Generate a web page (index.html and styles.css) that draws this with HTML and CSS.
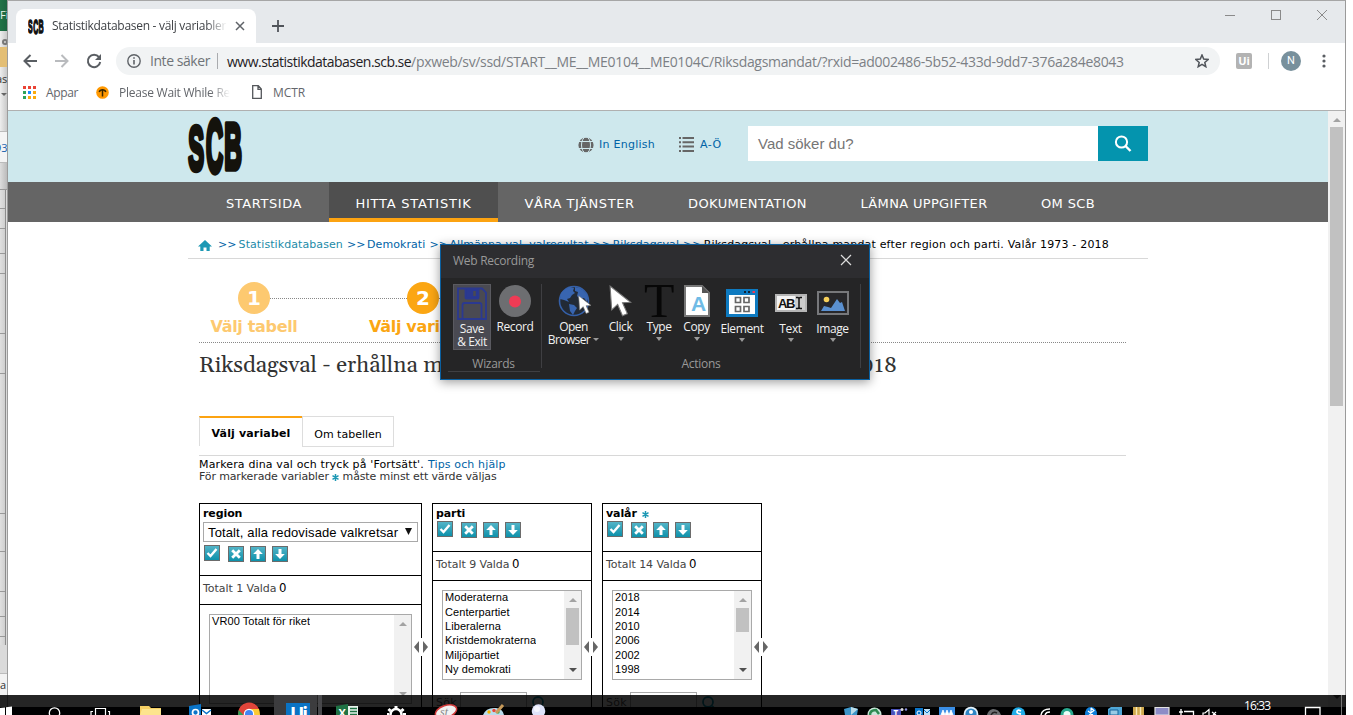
FILE: index.html
```html
<!DOCTYPE html>
<html lang="sv">
<head>
<meta charset="utf-8">
<title>Statistikdatabasen - välj variabler</title>
<link rel="stylesheet" href="styles.css">
</head>
<body>
<svg width="0" height="0" class="defs">
  <defs>
    <linearGradient id="teal" x1="0" y1="0" x2="0" y2="1"><stop offset="0" stop-color="#55b5c8"/><stop offset="1" stop-color="#0b90aa"/></linearGradient>
    <g id="scb" font-family="Liberation Sans" font-weight="700" font-size="70" stroke-width="6" stroke-linejoin="round">
      <text transform="translate(0.200 53.500) scale(.34 .91)">S</text>
      <text transform="translate(18 56.200) scale(.34 1.050)">C</text>
      <text transform="translate(36.200 53.300) scale(.35 .93)">B</text>
    </g>
    <g id="btn"><rect x=".5" y=".5" width="15" height="15" fill="url(#teal)" stroke="#6b6b6b"/></g>
    <g id="b-check"><use href="#btn"/><path d="M3.500 8l3 3 6-7" fill="none" stroke="#fff" stroke-width="2.400"/></g>
    <g id="b-x"><use href="#btn"/><path d="M4.200 4.200l7.600 7.600M11.800 4.200l-7.600 7.600" stroke="#fff" stroke-width="2.800"/></g>
    <g id="b-up"><use href="#btn"/><path d="M8 3l4.800 5H9.500v5h-3V8H3.200z" fill="#fff"/></g>
    <g id="b-down"><use href="#btn"/><path d="M8 13l4.800-5H9.500V3h-3v5H3.200z" fill="#fff"/></g>
    <path id="pointer" d="M1 1l1.500 22 5.500-5 4.500 10.500 4.500-2-4.500-10 7.500-.5z" fill="#fff" stroke="#777" stroke-width="1"/>
  </defs>
</svg>
<div class="desktop">
  <aside class="excel">
    <div class="ex-title">Fi</div>
    <div class="ex-ribbon"><i class="ex-knob"></i><i class="ex-gold"></i><span>as</span><i class="ex-caret"></i></div>
    <div class="ex-formula">93</div>
    <div class="ex-head"></div>
    <div class="ex-rows"><i class="r1"></i><i class="r2"></i><i class="r3"></i><i class="r2"></i><i class="r4"></i><i class="r5"></i><i class="r6"></i><i class="r7"></i><i class="r5"></i><i class="r3"></i><i class="r8"></i></div>
    <div class="ex-status">a</div>
  </aside>

  <div class="browser">
    <div class="tabstrip">
      <div class="tab">
        <svg width="16" height="17" viewBox="0 0 55 61" preserveAspectRatio="none"><use href="#scb" fill="#111" stroke="#111"/></svg>
        <span class="tab-title">Statistikdatabasen - välj variabler</span>
        <svg class="tab-close" width="10" height="10"><path d="M1 1l8 8M9 1L1 9" stroke="#5f6368" stroke-width="1.500"/></svg>
      </div>
      <svg class="newtab" width="12" height="12"><path d="M6 0v12M0 6h12" stroke="#50545a" stroke-width="1.800"/></svg>
      <div class="wincontrols">
        <svg width="10" height="10"><path d="M0 5.500h10" stroke="#8a8a8a"/></svg>
        <svg width="10" height="10"><rect x=".5" y=".5" width="9" height="9" fill="none" stroke="#8a8a8a"/></svg>
        <svg width="10" height="10"><path d="M0 0l10 10M10 0L0 10" stroke="#8a8a8a"/></svg>
      </div>
    </div>
    <div class="toolbar">
      <svg class="nav-i" width="14" height="14" fill="none" stroke="#5a5e63" stroke-width="2"><path d="M14 7H1.500M7.500 1l-6 6 6 6"/></svg>
      <svg class="nav-i" width="14" height="14" fill="none" stroke="#b9bbbe" stroke-width="2"><path d="M0 7h12.500M6.500 1l6 6-6 6"/></svg>
      <svg class="nav-i" width="16" height="16"><path d="M13 4.200A6.200 6.200 0 1 0 14.200 9" fill="none" stroke="#5a5e63" stroke-width="2"/><path d="M15 1v6H9z" fill="#5a5e63"/></svg>
      <div class="omnibox">
        <svg width="14" height="14"><circle cx="7" cy="7" r="6.200" fill="none" stroke="#5f6368" stroke-width="1.400"/><path d="M7 6v4.500M7 3.200v1.600" stroke="#5f6368" stroke-width="1.600"/></svg>
        <span class="insecure">Inte säker</span>
        <span class="host">www.statistikdatabasen.scb.se</span><span class="path">/pxweb/sv/ssd/START__ME__ME0104__ME0104C/Riksdagsmandat/?rxid=ad002486-5b52-433d-9dd7-376a284e8043</span>
        <svg class="star" width="14" height="14"><path d="M7 1l1.700 4.100 4.400.4-3.300 2.900 1 4.300L7 10.400l-3.800 2.300 1-4.300L.9 5.500l4.400-.4z" fill="none" stroke="#50545a" stroke-width="1.500"/></svg>
      </div>
      <div class="ui-ext">Ui</div>
      <div class="tool-sep"></div>
      <div class="avatar">N</div>
      <svg class="dots" width="4" height="14" fill="#5a5e63"><circle cx="2" cy="2" r="1.600"/><circle cx="2" cy="7" r="1.600"/><circle cx="2" cy="12" r="1.600"/></svg>
    </div>
    <div class="bookmarks">
      <svg width="13" height="13"><g fill="#ea4335"><path d="M0 0h3v3H0zM5 0h3v3H5zM10 0h3v3h-3z"/></g><path d="M0 5h3v3H0zM0 10h3v3H0z" fill="#2fa35a"/><path d="M5 5h3v3H5z" fill="#1a8cff"/><path d="M10 5h3v3h-3zM5 10h3v3H5zM10 10h3v3h-3z" fill="#fbab0c"/></svg>
      <span class="bm-appar">Appar</span>
      <svg width="13" height="13"><circle cx="6.500" cy="6.500" r="6.300" fill="#ff9800"/><path d="M3.200 6a3.500 3.500 0 0 1 6.600 0M6.500 4.500v6" fill="none" stroke="#3a2600" stroke-width="1.500"/></svg>
      <span class="bm-wait">Please Wait While Red</span>
      <svg width="10" height="14"><path d="M.7.700h5.600l3 3.300v9.300H.7zM6 .7V4.300h3.300" fill="none" stroke="#54575b" stroke-width="1.300"/></svg>
      <span class="bm-mctr">MCTR</span>
    </div>

    <div class="viewport">
      <div class="page">
        <header class="masthead">
          <div class="wrap mast-row">
            <svg class="logo" width="55" height="61" viewBox="0 0 55 61"><use href="#scb" fill="#14120c" stroke="#14120c"/></svg>
            <svg class="globe" width="16" height="16"><circle cx="8" cy="8" r="7.600" fill="#666"/><path d="M0 4.500h16M0 11.500h16" stroke="#cee8ed" stroke-width="1"/><ellipse cx="8" cy="8" rx="4.500" ry="8" fill="none" stroke="#cee8ed"/></svg>
            <a class="lang">In English</a>
            <svg class="list-i" width="15" height="15" fill="#666"><path d="M0 0h2v2H0zM0 4.300h2v2H0zM0 8.600h2v2H0zM0 13h2v2H0zM3.500 0H15v2H3.500zM3.500 4.300H15v2H3.500zM3.500 8.600H15v2H3.500zM3.500 13H15v2H3.500z"/></svg>
            <a class="az">A-Ö</a>
            <div class="search"><span>Vad söker du?</span>
              <div class="search-btn"><svg width="18" height="18"><circle cx="7.500" cy="7" r="5.600" fill="none" stroke="#fff" stroke-width="2"/><path d="M11.500 11l5 5" stroke="#fff" stroke-width="2.400"/></svg></div>
            </div>
          </div>
        </header>
        <nav class="mainnav">
          <a class="n1">STARTSIDA</a><a class="n2 active">HITTA STATISTIK</a><a class="n3">VÅRA TJÄNSTER</a><a class="n4">DOKUMENTATION</a><a class="n5">LÄMNA UPPGIFTER</a><a class="n6">OM SCB</a>
        </nav>
        <div class="wrap">
          <div class="crumbs">
            <svg width="14" height="11"><path d="M7 0l7 6.500h-2.300V11H8.500V7.500h-3V11H2.300V6.500H0z" fill="#1c98b4"/></svg>
            <i>&gt;&gt;</i><a class="c-teal">Statistikdatabasen</a><i>&gt;&gt;</i><a>Demokrati</a><i>&gt;&gt;</i><a>Allmänna val, valresultat</a><i>&gt;&gt;</i><a>Riksdagsval</a><i>&gt;&gt;</i><b>Riksdagsval - erhållna mandat efter region och parti. Valår 1973 - 2018</b>
          </div>
          <main class="content">
            <div class="steps">
              <div class="step s1"><span>1</span><em>Välj tabell</em></div>
              <div class="step-line"></div>
              <div class="step s2"><span>2</span><em>Välj variabel</em></div>
              <div class="step-line"></div>
            </div>
            <h1>Riksdagsval - erhållna mandat efter region och parti. Valår 1973 - 2018</h1>
            <div class="tabs"><div class="t-on">Välj variabel</div><div class="t-off">Om tabellen</div></div>
            <p class="help"><span class="h1a">Markera dina val och tryck på 'Fortsätt'.</span> <a>Tips och hjälp</a></p>
            <p class="help2">För markerade variabler <svg width="7" height="7"><path d="M3.500 0v7M.5 1.700l6 3.600M6.500 1.700l-6 3.600" stroke="#1c98b4" stroke-width="1.500"/></svg> måste minst ett värde väljas</p>
            <div class="boxes">
              <section class="box region">
                <div class="b-top"><h2>region</h2>
                  <div class="select"><span>Totalt, alla redovisade valkretsar</span><svg width="7" height="7"><path d="M0 0h7L3.500 7z" fill="#111"/></svg></div>
                  <div class="icons"><svg width="16" height="16"><use href="#b-check"/></svg><svg width="16" height="16"><use href="#b-x"/></svg><svg width="16" height="16"><use href="#b-up"/></svg><svg width="16" height="16"><use href="#b-down"/></svg></div>
                </div>
                <div class="b-tot">Totalt 1 Valda <span>0</span></div>
                <div class="listbox"><ul><li>VR00 Totalt för riket</li></ul><div class="sb off"><i class="up"></i><i class="dn"></i></div></div>
                <svg class="grip" width="16" height="18"><rect width="16" height="18" fill="#fff"/><path d="M6 3v12L1 9zM10 3v12l5-6z" fill="#666"/></svg>
              </section>
              <section class="box small">
                <div class="b-top"><h2>parti</h2>
                  <div class="icons"><svg width="16" height="16"><use href="#b-check"/></svg><svg width="16" height="16"><use href="#b-x"/></svg><svg width="16" height="16"><use href="#b-up"/></svg><svg width="16" height="16"><use href="#b-down"/></svg></div>
                </div>
                <div class="b-tot">Totalt 9 Valda <span>0</span></div>
                <div class="listbox"><ul><li>Moderaterna</li><li>Centerpartiet</li><li>Liberalerna</li><li>Kristdemokraterna</li><li>Miljöpartiet</li><li>Ny demokrati</li></ul><div class="sb"><i class="up"></i><b class="thumb-37"></b><i class="dn"></i></div></div>
                <div class="sok"><span>Sök</span><i></i><svg width="14" height="14"><circle cx="6" cy="6" r="5" fill="none" stroke="#0b90aa" stroke-width="1.800"/><path d="M10 10l3 3" stroke="#0b90aa" stroke-width="2"/></svg></div>
                <svg class="grip" width="16" height="18"><rect width="16" height="18" fill="#fff"/><path d="M6 3v12L1 9zM10 3v12l5-6z" fill="#666"/></svg>
              </section>
              <section class="box small">
                <div class="b-top"><h2>valår <svg width="7" height="7"><path d="M3.500 0v7M.5 1.700l6 3.600M6.500 1.700l-6 3.600" stroke="#1c98b4" stroke-width="1.500"/></svg></h2>
                  <div class="icons"><svg width="16" height="16"><use href="#b-check"/></svg><svg width="16" height="16"><use href="#b-x"/></svg><svg width="16" height="16"><use href="#b-up"/></svg><svg width="16" height="16"><use href="#b-down"/></svg></div>
                </div>
                <div class="b-tot">Totalt 14 Valda <span>0</span></div>
                <div class="listbox"><ul><li>2018</li><li>2014</li><li>2010</li><li>2006</li><li>2002</li><li>1998</li></ul><div class="sb"><i class="up"></i><b class="thumb-24"></b><i class="dn"></i></div></div>
                <div class="sok"><span>Sök</span><i></i><svg width="14" height="14"><circle cx="6" cy="6" r="5" fill="none" stroke="#0b90aa" stroke-width="1.800"/><path d="M10 10l3 3" stroke="#0b90aa" stroke-width="2"/></svg></div>
                <svg class="grip" width="16" height="18"><rect width="16" height="18" fill="#fff"/><path d="M6 3v12L1 9zM10 3v12l5-6z" fill="#666"/></svg>
              </section>
            </div>
          </main>
        </div>
      </div>
      <div class="pagebar"><i class="up"></i><b></b><i class="dn"></i></div>
    </div>
  </div>

  <div class="recorder">
    <div class="rec-title"><span>Web Recording</span><svg width="12" height="12"><path d="M1 1l10 10M11 1L1 11" stroke="#ddd" stroke-width="1.200"/></svg></div>
    <div class="rec-body">
      <div class="group wizards">
        <div class="tools">
          <div class="tool save"><svg width="32" height="34" fill="none" stroke="#2b3990" stroke-width="1.800"><path d="M2 1.500h24l4 4V32H2z"/><path d="M6.500 32V18q0-2 2-2h15q2 0 2 2v14"/><path d="M9.500 2v8.500q0 1 1 1h11q1 0 1-1V2" fill="#2b3990"/><path d="M18.500 4v5" stroke="#4a4a52" stroke-width="2.500"/></svg><span>Save<br>&amp; Exit</span></div>
          <div class="tool record"><svg width="32" height="32"><circle cx="16" cy="16" r="16" fill="#6d6e71"/><circle cx="16" cy="16.500" r="6" fill="#ef3b55"/></svg><span>Record</span></div>
        </div>
        <div class="g-name">Wizards</div>
      </div>
      <div class="group actions">
        <div class="tools">
          <div class="tool open"><svg width="34" height="32"><circle cx="17" cy="16" r="14.500" fill="#222a36" stroke="#3560a8" stroke-width="1.600"/><path d="M3 14Q3 5 13 2l4 1-1 3 2 2-3 2-2 3-3 1 2 3-5-2zM18 2q10 1 13 11l-1 4-3-4-4 1-3-3 1-4-3-1zM12 19l5 1 3 3-2 3-2 4-3-4z" fill="#3865b0"/><g transform="translate(21 10) scale(.65)"><use href="#pointer"/></g></svg><span>Open<br>Browser<i class="inl"></i></span></div>
          <div class="tool click"><svg width="24" height="32"><g transform="translate(0 0) scale(1.080)"><use href="#pointer"/></g></svg><span>Click</span><i></i></div>
          <div class="tool type"><svg width="30" height="32"><text x="15" y="32" text-anchor="middle" font-family="Liberation Serif" font-size="49" textLength="30" lengthAdjust="spacingAndGlyphs" fill="#070707">T</text></svg><span>Type</span><i></i></div>
          <div class="tool copy"><svg width="26" height="32"><path d="M1 1h17l7 7v23H1z" fill="#fff" stroke="#777" stroke-width="2"/><path d="M18 1v7h7z" fill="#555"/><text x="14.500" y="26" text-anchor="middle" font-family="Liberation Sans" font-weight="700" font-size="21" fill="#6fbbe6">A</text></svg><span>Copy</span><i></i></div>
          <div class="tool element"><svg width="32" height="28"><path d="M0 0h32v28H0z" fill="#0e7ac0"/><path d="M3 6h26v19H3z" fill="#fff"/><path d="M18 3h2M22 3h2" stroke="#123" stroke-width="2"/><path d="M26.500 3h2.500" stroke="#ef3b55" stroke-width="2"/><g fill="none" stroke="#666" stroke-width="1.700"><path d="M9.500 8.500h5v5h-5zM18 8.500h5v5h-5zM9.500 17.500h5v5h-5zM18 17.500h5v5h-5z"/></g></svg><span>Element</span><i></i></div>
          <div class="tool text"><svg width="32" height="18"><rect x="1" y="1" width="30" height="16" fill="#f4f4f4" stroke="#b5b5b5" stroke-width="2"/><path d="M20 2h10v14H20z" fill="#ccc"/><text x="3" y="13.500" font-family="Liberation Sans" font-weight="700" font-size="13" textLength="17" fill="#111">AB</text><path d="M21 3.500h2l1 1 1-1h2M21 14.500h2l1-1 1 1h2M24 4.500v9" fill="none" stroke="#111" stroke-width="1.500"/></svg><span>Text</span><i></i></div>
          <div class="tool image"><svg width="32" height="24"><rect x="1" y="1" width="30" height="22" fill="#27272a" stroke="#77787b" stroke-width="2"/><circle cx="9.500" cy="8.500" r="2.800" fill="#f7d05a"/><path d="M4 20l3-5 4 1 3 1 6-9 3 4 2-1 3 9z" fill="#5a90d0"/></svg><span>Image</span><i></i></div>
        </div>
        <div class="g-name">Actions</div>
      </div>
    </div>
  </div>

  <div class="taskbar">
    <div class="tb-shade"></div>
    <svg class="tb-icons" width="1346" height="20" viewBox="0 695 1346 20">
      <path d="M0 708l5-.5V715H0zM6 707.300l6-.8V715H6z" fill="#fff"/>
      <circle cx="54.500" cy="713" r="5.200" fill="none" stroke="#fff" stroke-width="1.300"/>
      <path d="M95.500 715v-6.500h10v6.500M91 711.500h2M91 711v4M110 711.500h-2M109.500 711v4" fill="none" stroke="#fff" stroke-width="1.200"/>
      <path d="M140 715v-9h9l2 2h10v7z" fill="#f5cf63"/><path d="M142 709h19v6h-21z" fill="#fde48d"/>
      <path d="M189 706l12-2v11h-12z" fill="#0a74c8"/><circle cx="195.500" cy="712.500" r="3" fill="none" stroke="#fff" stroke-width="1.700"/><path d="M202 709h9v6h-9z" fill="#fff"/><path d="M202 710l4.500 3.500 4.500-3.500" fill="none" stroke="#0a74c8" stroke-width="1.500"/>
      <path d="M238 713a11 11 0 0 1 21-4h-10l-5 6h-6z" fill="#e0453a"/><path d="M249 709h10q1 3 1 6h-8z" fill="#fcc934"/><path d="M238.500 710l5 5h-5.500z" fill="#2f9f55"/><circle cx="249" cy="714" r="5.200" fill="#fff"/><circle cx="249" cy="714" r="4" fill="#4285f4"/>
      <path d="M274 695h43v20h-43z" fill="#3c3c3e"/><path d="M318 695h4v20h-4z" fill="#48484b"/><path d="M286 703h24v12h-24z" fill="#0a73c4"/>
      <text x="290" y="721" font-family="Open Sans" font-weight="700" font-size="19" fill="#fff" textLength="18">Ui</text>
      <path d="M336 706l12-2v11h-12z" fill="#1f7244"/><path d="M348 706h10v9h-10z" fill="#e8f3ec"/><path d="M350 708.500h7M350 711.500h7M350 714.500h7" stroke="#1f7244" stroke-width="1.400"/><text x="338.500" y="717" font-family="Open Sans" font-weight="700" font-size="11" fill="#fff">X</text>
      <circle cx="396" cy="714.500" r="5.500" fill="none" stroke="#fff" stroke-width="2.600"/><path d="M396 709v-3M390.500 711l-2-2M401.500 711l2-2M389 714.500h-2M403 714.500h3" stroke="#fff" stroke-width="3"/>
      <ellipse cx="446" cy="711.500" rx="11" ry="6" transform="rotate(-18 446 711.500)" fill="#f2f2f2" stroke="#d03a3a" stroke-width="1.500"/><text x="440" y="716" font-family="Liberation Serif" font-style="italic" font-size="12" fill="#888">st</text>
      <path d="M483 715q3-8 13-7 7 1 8 7z" fill="#b9dcec"/><circle cx="489" cy="712" r="1.700" fill="#f4b400"/><circle cx="494" cy="710.500" r="1.700" fill="#e8463a"/><circle cx="498" cy="712" r="1.700" fill="#3daa50"/><path d="M496 713l7-8" stroke="#c79a5a" stroke-width="3"/>
      <circle cx="538.500" cy="711" r="6.800" fill="#dfe3fa"/><circle cx="537" cy="709" r="3" fill="#f6f7ff"/>
      <path d="M844 709l7-2 7 2-1 6h-12z" fill="#3d96c9"/><path d="M851 707l7 2-7 6z" fill="#b9dbe8"/>
      <circle cx="874.500" cy="714.500" r="7" fill="#c9e7da"/><path d="M870 715q0-5 6-5l3 4" fill="none" stroke="#2f8a52" stroke-width="2.500"/>
      <path d="M891 709h10v6h-10z" fill="#4b53bc"/><circle cx="902" cy="709.500" r="1.500" fill="#ddd"/><circle cx="906" cy="709.500" r="1.200" fill="#8b90e0"/><text x="893.500" y="716" font-family="Open Sans" font-weight="700" font-size="8" fill="#fff">T</text>
      <path d="M915 708h8v7h-8z" fill="#0a74c8"/><circle cx="919" cy="713" r="2" fill="none" stroke="#fff"/><path d="M924 709h6v6h-6z" fill="#bfe0f5"/><path d="M924 710l3 3 3-3" fill="none" stroke="#0a74c8"/>
      <path d="M939 707h16v8h-16z" fill="#3a8ee6"/><path d="M941 715l2-5 2 5M945 715l2-5 2 5M949 715l2-5 2 5" fill="#fff" stroke="#fff" stroke-width=".8"/>
      <circle cx="971" cy="714" r="7.300" fill="#e4f2fb"/><circle cx="971" cy="714" r="5.600" fill="#2f86c5"/><circle cx="971" cy="712" r="2" fill="#fff"/>
      <path d="M987 715q1-5 6-6 6 0 8 6z" fill="#6d6f72"/><path d="M991 715q2-4 6-2" fill="none" stroke="#222" stroke-width="1.500"/>
      <circle cx="1018.500" cy="714" r="6.800" fill="#20ace8"/><path d="M1021 711q-4-2-4 1 0 1.500 4 2" fill="none" stroke="#fff" stroke-width="1.800"/>
      <path d="M1041 715q1-6 9-6M1045 715q1-3 5-3" fill="none" stroke="#fff" stroke-width="1.400"/>
      <circle cx="1067" cy="714.500" r="5" fill="#e8fff8" stroke="#29a98e" stroke-width="3"/>
      <path d="M1085 715q0-8 6-8t6 8z" fill="#1080dc"/><path d="M1088 711l5 4M1091 708v7M1091 708l3 2.500-5 4" fill="none" stroke="#fff" stroke-width="1.100"/>
      <path d="M1108 709l3-2h11v8h-14z" fill="#4fa6d6"/><path d="M1110 710h8v5h-8z" fill="#98cbe5" stroke="#17649b"/>
      <path d="M1133 707h11v8h-11z" fill="#d0a94d"/><path d="M1136.500 707v8M1140.500 707v8" stroke="#f7e9b8" stroke-width="1.400"/>
      <path d="M1155 707.500h14v7.500h-14z" fill="#8d8cc6" stroke="#e3e3e3" stroke-width="1.200"/>
      <path d="M1179 712h4M1181 709v6M1184 711.500h9.500v3.500" fill="none" stroke="#fff" stroke-width="1.300"/>
      <path d="M1203 715v-2h2l4-3.500v5.500M1212 712l4 3M1216 712l-3 3" fill="none" stroke="#fff" stroke-width="1.200"/>
      <path d="M1305.500 715v-7.500h14.500v7.500" fill="none" stroke="#fff" stroke-width="1.300"/>
      <path d="M1341.500 695v20" stroke="#777"/>
    </svg>
    <div class="clock">16:33</div>
  </div>
</div>
</body>
</html>
```
FILE: styles.css
```css
* { box-sizing: border-box; }
body { margin: 0; background: #fff; overflow: hidden; font-family: "DejaVu Sans", Verdana, sans-serif; font-size: 11px; }
svg { display: block; flex: none; }
i, em { font-style: normal; }
h1, h2, p, ul { margin: 0; padding: 0; font-weight: 400; list-style: none; }
.defs { position: absolute; }
.desktop { position: relative; width: 1346px; height: 715px; overflow: hidden; background: #04040c; white-space: nowrap; }

/* spreadsheet window peeking out on the left */
.excel { position: absolute; left: 0; top: 0; width: 8px; height: 707px; overflow: hidden; background: #dadada; border-right: 1px solid #9c9c9c; display: flex; flex-direction: column; font-family: "Open Sans", sans-serif; }
.ex-title { height: 31px; background: linear-gradient(90deg, #217346, #1c6540); color: #e7f2ec; font-size: 11px; line-height: 30px; }
.ex-ribbon { height: 100px; background: linear-gradient(90deg, #eee, #c9c9c9); display: flex; flex-direction: column; }
.ex-knob { width: 6px; height: 6px; margin: 8px 0 2px 2px; border: 2px solid #777; border-radius: 3px; }
.ex-gold { height: 20px; background: #e3be75; }
.ex-ribbon span { font-size: 11px; line-height: 24px; margin-left: -4px; color: #333; }
.ex-caret { border: 3px solid transparent; border-top-color: #666; margin: 2px 0 0 1px; width: 6px; }
.ex-formula { height: 32px; margin-top: 0; background: #f4f4f4; line-height: 32px; font-size: 11px; color: #1862ad; border: solid #bbb; border-width: 1px 0; text-indent: -5px; }
.ex-head { height: 27px; background: linear-gradient(90deg, #ddd, #bbb); border-bottom: 1px solid #999; }
.ex-rows { display: flex; flex-direction: column; height: 455px; border-right: 1px solid #8c8c8c; margin-right: 1px; background: linear-gradient(90deg, #e0e0e0, #cfcfcf); }
.ex-rows i { border-bottom: 1px solid #999; flex: none; }
.r1 { height: 19px; } .r2 { height: 20px; } .r3 { height: 25px; } .r4 { height: 60px; } .r5 { height: 40px; } .r6 { height: 140px; } .r7 { height: 38px; } .r8 { height: 20px; }
.ex-status { margin-top: 28px; background: #f2f2f2; height: 34px; border-top: 1px solid #bbb; line-height: 22px; color: #333; }

/* browser window */
.browser { position: absolute; left: 8px; top: 0; width: 1338px; height: 715px; background: #fff; border-top: 1px solid #a6a6a6; border-right: 1px solid #9a9a9a; font-family: "Open Sans", "Segoe UI", sans-serif; }
.tabstrip { height: 42px; background: #e6e9ec; display: flex; padding-left: 8px; }
.tab { margin-top: 8px; width: 240px; height: 34px; background: #fff; border-radius: 8px 8px 0 0; display: flex; align-items: center; padding-left: 12px; }
.tab-title { margin-left: 8px; width: 175px; overflow: hidden; font-size: 12px; line-height: 18px; padding-top: 1px; margin-top: -1px; letter-spacing: -.29px; color: #3f4246; mask-image: linear-gradient(90deg, #000 88%, transparent); }
.tab-close { margin-left: 8px; }
.newtab { margin: 19px 0 0 16px; }
.wincontrols { margin-left: auto; padding: 9px 18px 0 0; display: flex; gap: 36px; }
.toolbar { height: 36px; display: flex; align-items: center; padding-left: 15px; }
.nav-i { margin-right: 18px; }
.nav-i:nth-child(3) { margin: 0 14px 0 -1px; }
.omnibox { width: 1104px; height: 28px; border-radius: 14px; background: #f1f3f4; display: flex; align-items: center; padding-left: 11px; font-size: 14px; color: #7c8085; }
.insecure { margin-left: 9px; width: 68px; letter-spacing: -.44px; border-right: 1px solid #a9abae; line-height: 16px; color: #6f7378; }
.host { color: #1f2124; letter-spacing: -.52px; margin-left: 9px; }
.path { letter-spacing: -.32px; }
.star { margin-left: auto; margin-right: 11px; }
.ui-ext { margin-left: 16px; width: 16px; height: 16px; border-radius: 2px; background: #b3b3b3; color: #fff; font: 700 11px/16px "Open Sans", sans-serif; text-align: center; }
.tool-sep { width: 1px; height: 16px; background: #cfd1d3; margin: 0 12px 0 16px; }
.avatar { width: 20px; height: 20px; border-radius: 50%; background: #78909c; color: #fff; font: 11px/20px Roboto, sans-serif; text-align: center; }
.dots { margin-left: 21px; }
.bookmarks { height: 32px; border-bottom: 1px solid #b0b0b0; display: flex; align-items: center; padding: 0 0 5px 15px; font-size: 12px; color: #63666b; }
.bm-appar { margin: 0 19px 0 10px; width: 31px; letter-spacing: -.37px; }
.bm-wait { margin: 0 22px 0 10px; width: 111px; overflow: hidden; letter-spacing: -.24px; mask-image: linear-gradient(90deg, #000 82%, transparent); }
.bm-mctr { margin-left: 11px; letter-spacing: -.1px; }

.viewport { display: flex; height: 604px; overflow: hidden; font-family: "DejaVu Sans", Verdana, sans-serif; }
.page { width: 1320px; overflow: hidden; }
.pagebar { width: 17px; height: 596px; background: #f1f1f1; display: flex; flex-direction: column; align-items: center; padding: 7px 0 8px; }
.pagebar b { width: 13px; height: 279px; background: #c1c1c1; margin-top: 5px; }
.up { border: 4px solid transparent; border-top: 0; border-bottom-color: #a3a3a3; }
.dn { border: 4px solid transparent; border-bottom: 0; border-top-color: #505050; margin-top: auto; }

/* site header */
.wrap { width: 960px; margin-left: 180px; }
.masthead { height: 71px; background: #cee8ed; }
.mast-row { display: flex; align-items: center; height: 65px; }
.logo { margin: 5px 335px 0 0; overflow: visible; }
.globe, .list-i { margin-top: 2px; }
.masthead a { color: #0063a6; line-height: 16px; margin-top: 2px; }
.masthead .lang { letter-spacing: .26px; margin-left: 5px; width: 80px; }
.masthead .az { letter-spacing: .5px; margin-left: 6px; width: 48px; }
.search { display: flex; width: 400px; height: 35px; background: #fff; font: 15px/35px "Liberation Sans", Arial, sans-serif; color: #757575; justify-content: space-between; padding-left: 10px; }
.search-btn { width: 50px; background: #0494ae; padding: 9px 0 0 16px; }
.mainnav { height: 40px; background: #656565; display: flex; padding-left: 191px; font-size: 13px; color: #fff; text-align: center; line-height: 43px; }
.mainnav a { height: 40px; }
.n1 { width: 130px; letter-spacing: .57px; } .n2 { width: 169px; letter-spacing: .76px; } .n3 { width: 163px; letter-spacing: .54px; } .n4 { width: 173px; letter-spacing: .41px; } .n5 { width: 180px; letter-spacing: .34px; } .n6 { width: 108px; letter-spacing: .36px; }
.active { background: #4f4f4f; border-bottom: 4px solid #fca311; }
.crumbs { height: 37px; border-bottom: 1px solid #d8d8d8; display: flex; align-items: center; padding: 10px 0 0 10px; color: #0063a6; letter-spacing: .08px; line-height: 14px; }
.crumbs i { margin: 0 1.500px 0 4px; }
.crumbs svg + i { margin: 0 2px 0 6px; }
.crumbs .c-teal { color: #1c8ba8; }
.crumbs b { font-weight: 400; color: #000; letter-spacing: .18px; margin-left: .500px; }

/* content */
.content { padding-left: 11px; width: 938px; }
.steps { height: 84px; border-bottom: 1px dotted #888; display: flex; padding-top: 23px; }
.step { display: flex; flex-direction: column; align-items: center; width: 110px; font-weight: 700; font-size: 16px; flex: none; letter-spacing: -.32px; line-height: 26px; }
.step span { width: 32px; height: 32px; border-radius: 50%; color: #fff; font-size: 20px; line-height: 32px; text-align: center; letter-spacing: 0; }
.s1 { color: #fdc970; } .s1 span { background: #fdc970; }
.s2 { color: #fba613; } .s2 span { background: #fba613; }
.step-line { width: 137px; margin: 16px -39px 0; border-top: 1px dotted #888; height: 0; flex: none; }
h1 { margin-top: 10px; height: 63px; font: 22.400px/26px Gelasio, Georgia, serif; color: #333; }
.tabs { display: flex; height: 40px; border-bottom: 1px solid #d8d8d8; align-items: flex-start; }
.t-on { width: 103px; height: 30px; border-top: 2px solid #fca311; border-left: 1px solid #ddd; text-align: center; font-weight: 700; line-height: 31px; letter-spacing: .15px; }
.t-off { width: 92px; height: 31px; border: 1px solid #ddd; text-align: center; line-height: 35px; }
.help { height: 14px; line-height: 17px; display: flex; gap: 4px; color: #000; letter-spacing: .14px; }
.help a { color: #0063a6; }
.help2 { height: 33px; line-height: 13px; color: #333; letter-spacing: -.13px; }
.help2 svg, h2 svg { display: inline-block; vertical-align: -1px; }
.boxes { display: flex; gap: 10px; }
.box { position: relative; height: 230px; border: 1px solid #000; }
.region { width: 223px; } .small { width: 160px; }
.b-top { height: 48px; border-bottom: 1px solid #000; padding: 2px 3px 0; }
.region .b-top { height: 72px; }
h2 { font-size: 11px; font-weight: 700; line-height: 15px; height: 16px; letter-spacing: -.1px; }
h2 svg { margin-left: 2px; }
.select { width: 215px; height: 20px; border: 1px solid #a9a9a9; font: 13px/19px "Liberation Sans", Arial, sans-serif; letter-spacing: .13px; display: flex; justify-content: space-between; padding: 0 5px 0 4px; margin: 0 0 4px; }
.select svg { margin-top: 5px; }
.icons { display: flex; gap: 6px; margin-top: -1px; padding-left: 1px; }
.icons svg { margin-top: 1px; }
.icons svg:first-child { margin: 0 2px 0 0; }
.b-tot { height: 29px; border-bottom: 1px solid #000; padding: 0 3px; line-height: 25px; color: #444; letter-spacing: -.05px; }
.b-tot span { font: 13px/20px "DejaVu Sans Condensed", "DejaVu Sans"; font-stretch: condensed; color: #000; margin-left: -1px; }
.listbox { margin: 9px 9px 0; height: 90px; border: 1px solid #a9a9a9; display: flex; justify-content: space-between; font: 11px/14.300px "Liberation Sans", Arial, sans-serif; letter-spacing: .08px; color: #000; }
.listbox ul { padding-left: 2px; overflow: hidden; }
.listbox li:first-child { margin-top: -.600px; }
.sb { width: 17px; background: #f1f1f1; display: flex; flex-direction: column; align-items: center; padding: 7px 0; }
.off .dn { border-top-color: #a3a3a3; }
.sb b { width: 13px; background: #c1c1c1; margin-top: 6px; }
.thumb-37 { height: 37px; } .thumb-24 { height: 24px; }
.sok { display: flex; margin: 12px 0 0 3px; color: #555; line-height: 22px; letter-spacing: .3px; }
.sok span { width: 24px; }
.sok i { width: 67px; height: 22px; border: 1px solid #a9a9a9; }
.sok svg { margin: 4px 0 0 5px; }
.grip { position: absolute; right: -8px; top: 134px; }

/* recorder window */
.recorder { position: absolute; left: 440px; top: 244px; width: 430px; height: 136px; border: 1px solid #0a5f9f; background: #252526; box-shadow: 0 2px 10px rgba(0,0,0,.4); font: 12px/13px "Open Sans", "Segoe UI", sans-serif; color: #f1f1f1; }
.rec-title { height: 33px; background: #2d2d30; color: #999; display: flex; justify-content: space-between; padding: 9px 17px 0 12px; letter-spacing: -.27px; line-height: 14px; }
.rec-body { display: flex; padding-top: 6px; }
.group { height: 84px; border-right: 1px solid #3f3f42; display: flex; flex-direction: column; justify-content: space-between; position: relative; }
.wizards { width: 101px; }
.wizards::after { content: ""; position: absolute; left: 7px; bottom: -4px; width: 92px; border-bottom: 1px solid #3f3f42; }
.actions { width: 319px; }
.tools { display: flex; }
.tool { display: flex; flex-direction: column; align-items: center; text-align: center; letter-spacing: -.4px; flex: none; padding-top: 1px; }
.tool > span { margin-top: 3px; }
.tool > i { border: 3.500px solid transparent; border-top: 4px solid #999; border-bottom: 0; margin-top: 4px; }
.inl { display: inline-block; border: 3px solid transparent; border-top: 3.500px solid #999; border-bottom: 0; vertical-align: 3px; margin-left: 3px; }
.save { width: 38px; height: 66px; margin-left: 12px; background: #4a4a52; border: 1px solid #5a5a60; padding-top: 2px; }
.save > span { margin-top: 1px; }
.record { width: 48px; }
.open { width: 63px; letter-spacing: -.6px; }
.click { width: 31px; } .type { width: 46px; } .copy { width: 29px; }
.element { width: 62px; padding-top: 5px; } .text { width: 35px; padding-top: 10px; } .image { width: 49px; padding-top: 7px; }
.element > span { margin-top: 5px; } .text > span { margin-top: 10px; } .image > span { margin-top: 7px; }
.element > i, .text > i, .image > i { margin-top: 3px; }
.g-name { text-align: center; color: #999; letter-spacing: -.3px; line-height: 14px; margin-bottom: -3px; }
.wizards .g-name { padding-left: 5px; }

/* taskbar */
.taskbar { position: absolute; left: 0; top: 695px; width: 1346px; height: 20px; background: linear-gradient(transparent 12px, #04040c 12px); }
.tb-shade { height: 20px; background: rgba(0,0,0,.855); }
.tb-icons { position: absolute; left: 0; top: 0; }
.clock { position: absolute; left: 1244px; top: 4px; color: #fff; font: 12px/14px "Open Sans", "Segoe UI", sans-serif; letter-spacing: -.9px; }
```
